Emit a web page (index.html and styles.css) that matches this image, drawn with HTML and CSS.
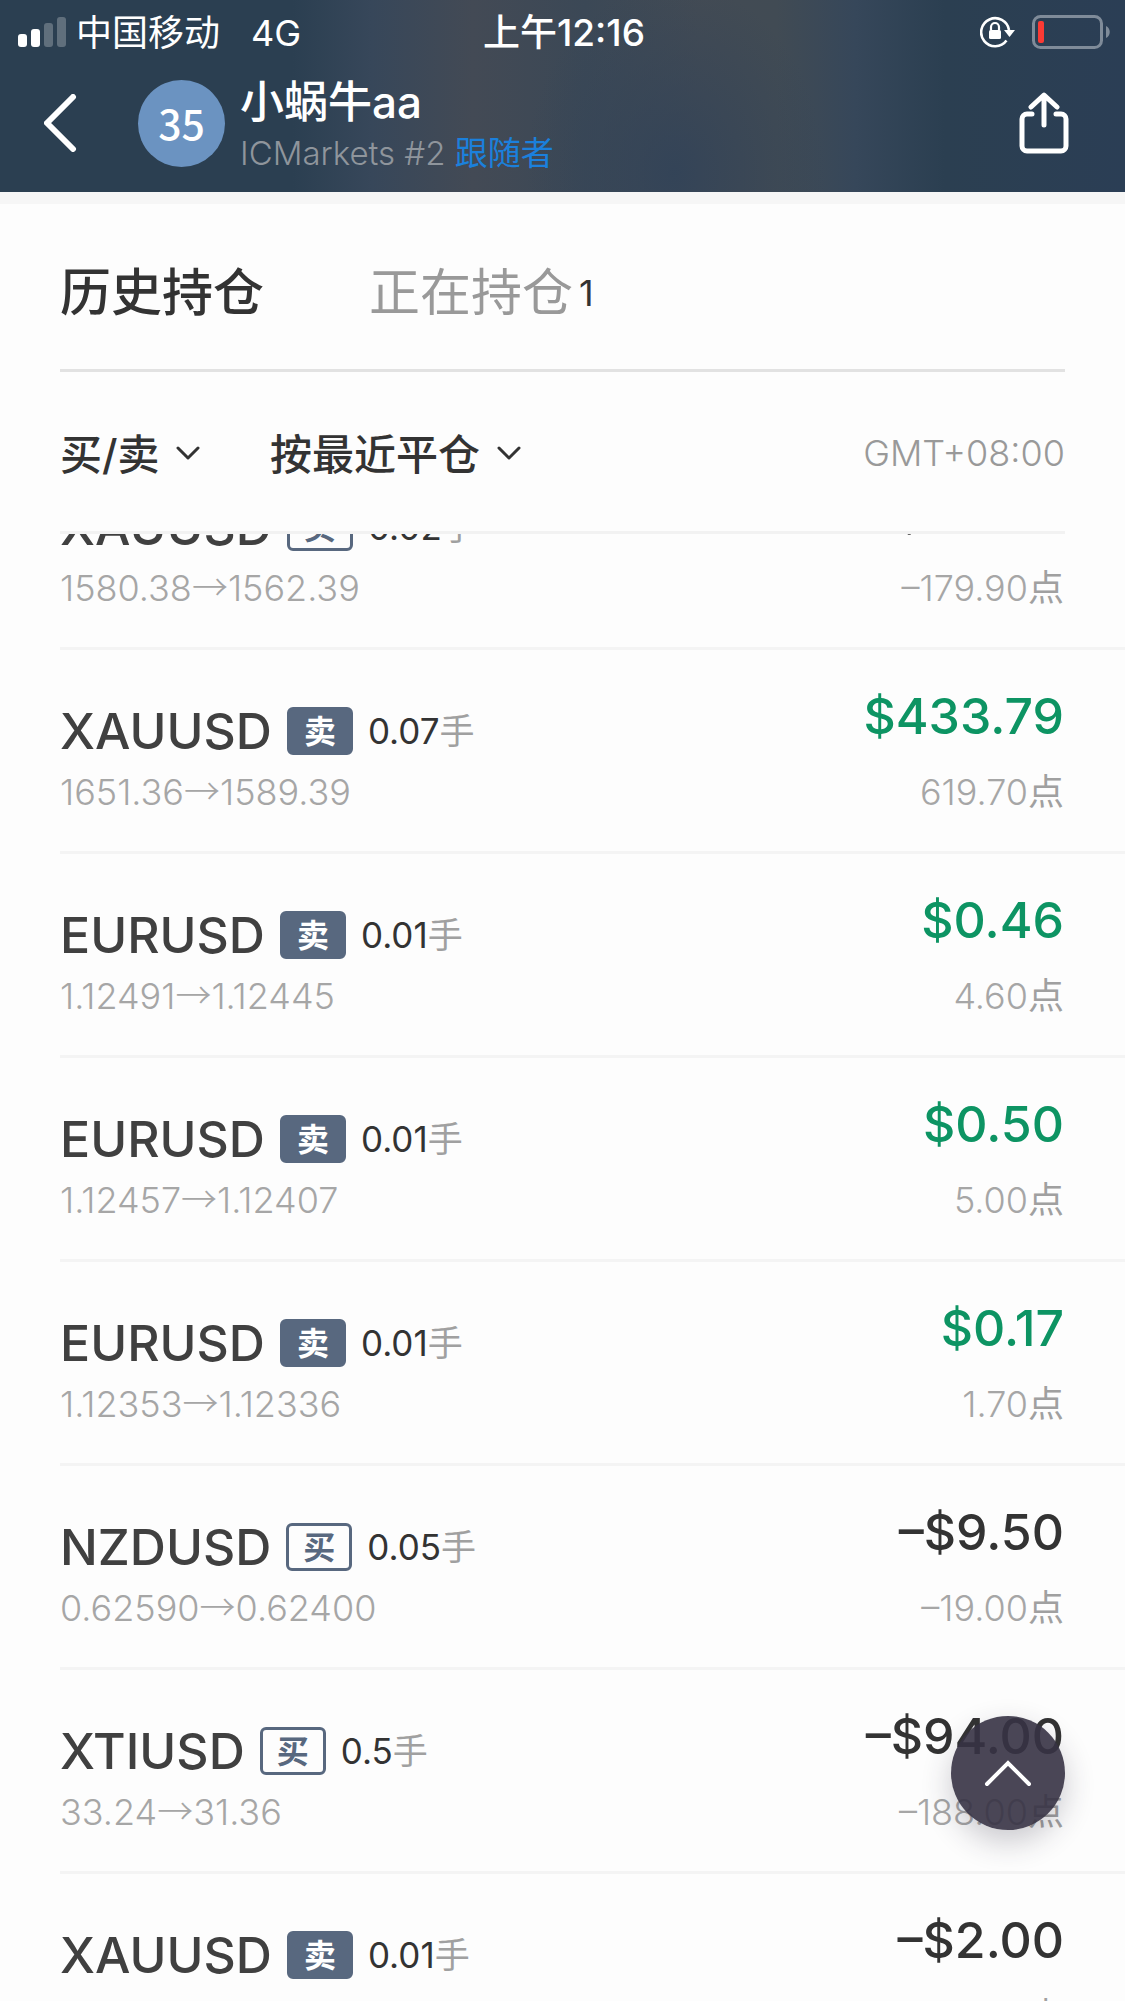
FILE: index.html
```html
<!DOCTYPE html>
<html lang="zh-CN">
<head>
<meta charset="utf-8">
<meta name="viewport" content="width=device-width, initial-scale=1">
<title>小蜗牛aa</title>
<link rel="stylesheet" href="styles.css">
</head>
<body>
<div class="app">
  <header class="header">
    <div class="status">
      <div class="status-left">
        <svg class="signal" width="48" height="30" viewBox="0 0 48 30" fill="#fff" aria-hidden="true">
          <rect x="0" y="17" width="9" height="13" rx="3"/>
          <rect x="13" y="12" width="9" height="18" rx="3"/>
          <rect x="26" y="6" width="9" height="24" rx="3" opacity=".25"/>
          <rect x="39" y="0" width="9" height="30" rx="3" opacity=".25"/>
        </svg>
        <span>中国移动</span>
        <span class="network">4G</span>
      </div>
      <span class="clock">上午12:16</span>
      <div class="status-right">
        <svg width="36" height="32" viewBox="0 0 36 32" aria-hidden="true">
          <path d="M26.5 24.5A14 14 0 1 1 29 14" fill="none" stroke="#fff" stroke-width="2.6"/>
          <path d="M24 14h11l-5.500 7z" fill="#fff"/>
          <rect x="9" y="14" width="12" height="9" rx="1.500" fill="#fff"/>
          <path d="M11 14v-3a4 4 0 0 1 8 0v3" fill="none" stroke="#fff" stroke-width="2.2"/>
        </svg>
        <svg width="78" height="34" viewBox="0 0 78 34" aria-hidden="true">
          <rect x="1.5" y="1.5" width="68" height="31" rx="7" fill="none" stroke="#7f8b99" stroke-width="3"/>
          <path d="M74 11c5 2 5 10 0 12z" fill="#7f8b99"/>
          <rect x="6" y="6" width="6" height="22" rx="2" fill="#fb3a34"/>
        </svg>
      </div>
    </div>
    <div class="nav">
      <button class="icon-btn back" type="button" aria-label="返回">
        <svg width="33" height="58" viewBox="0 0 33 58" fill="none" stroke="#fff" stroke-width="6" stroke-linecap="round" stroke-linejoin="round"><path d="M29 3 3 29l26 26"/></svg>
      </button>
      <div class="avatar">35</div>
      <div class="profile">
        <h1 class="name">小蜗牛aa</h1>
        <p class="account">ICMarkets #2 <a class="role" href="#">跟随者</a></p>
      </div>
      <button class="icon-btn share" type="button" aria-label="分享">
        <svg width="50" height="62" viewBox="0 0 50 62" fill="none" stroke="#fff" stroke-width="5" stroke-linecap="round" stroke-linejoin="round"><path d="M13 22H8a5 5 0 0 0-5 5v27a5 5 0 0 0 5 5h34a5 5 0 0 0 5-5V27a5 5 0 0 0-5-5h-5M25 33V4M12 15 25 3l13 12"/></svg>
      </button>
    </div>
  </header>

  <nav class="tabs">
    <a class="tab tab-active" href="#history">历史持仓</a>
    <a class="tab" href="#open">正在持仓<span class="count">1</span></a>
  </nav>

  <div class="filters">
    <label class="filter">
      <select class="select" aria-label="方向"><option>买/卖</option><option>买</option><option>卖</option></select>
      <svg width="24" height="14" viewBox="0 0 24 14" fill="none" stroke="#333" stroke-width="3" stroke-linecap="round" stroke-linejoin="round"><path d="m2 2 10 10L22 2"/></svg>
    </label>
    <label class="filter">
      <select class="select" aria-label="排序"><option>按最近平仓</option><option>按最近开仓</option></select>
      <svg width="24" height="14" viewBox="0 0 24 14" fill="none" stroke="#333" stroke-width="3" stroke-linecap="round" stroke-linejoin="round"><path d="m2 2 10 10L22 2"/></svg>
    </label>
    <span class="zone">GMT+08:00</span>
  </div>

  <main class="viewport" id="history">
    <ul class="trades">
      <li class="trade">
        <div class="deal"><div class="line"><span class="symbol">XAUUSD</span><span class="tag tag-buy">买</span><span class="lots">0.02<span class="unit">手</span></span></div><div class="sub">1580.38<span class="arrow">→</span>1562.39</div></div>
        <div class="result"><div class="amount">–$35.98</div><div class="sub">–179.90<span class="unit">点</span></div></div>
      </li>
      <li class="trade">
        <div class="deal"><div class="line"><span class="symbol">XAUUSD</span><span class="tag">卖</span><span class="lots">0.07<span class="unit">手</span></span></div><div class="sub">1651.36<span class="arrow">→</span>1589.39</div></div>
        <div class="result"><div class="amount gain">$433.79</div><div class="sub">619.70<span class="unit">点</span></div></div>
      </li>
      <li class="trade">
        <div class="deal"><div class="line"><span class="symbol">EURUSD</span><span class="tag">卖</span><span class="lots">0.01<span class="unit">手</span></span></div><div class="sub">1.12491<span class="arrow">→</span>1.12445</div></div>
        <div class="result"><div class="amount gain">$0.46</div><div class="sub">4.60<span class="unit">点</span></div></div>
      </li>
      <li class="trade">
        <div class="deal"><div class="line"><span class="symbol">EURUSD</span><span class="tag">卖</span><span class="lots">0.01<span class="unit">手</span></span></div><div class="sub">1.12457<span class="arrow">→</span>1.12407</div></div>
        <div class="result"><div class="amount gain">$0.50</div><div class="sub">5.00<span class="unit">点</span></div></div>
      </li>
      <li class="trade">
        <div class="deal"><div class="line"><span class="symbol">EURUSD</span><span class="tag">卖</span><span class="lots">0.01<span class="unit">手</span></span></div><div class="sub">1.12353<span class="arrow">→</span>1.12336</div></div>
        <div class="result"><div class="amount gain">$0.17</div><div class="sub">1.70<span class="unit">点</span></div></div>
      </li>
      <li class="trade">
        <div class="deal"><div class="line"><span class="symbol">NZDUSD</span><span class="tag tag-buy">买</span><span class="lots">0.05<span class="unit">手</span></span></div><div class="sub">0.62590<span class="arrow">→</span>0.62400</div></div>
        <div class="result"><div class="amount">–$9.50</div><div class="sub">–19.00<span class="unit">点</span></div></div>
      </li>
      <li class="trade">
        <div class="deal"><div class="line"><span class="symbol">XTIUSD</span><span class="tag tag-buy">买</span><span class="lots">0.5<span class="unit">手</span></span></div><div class="sub">33.24<span class="arrow">→</span>31.36</div></div>
        <div class="result"><div class="amount">–$94.00</div><div class="sub">–188.00<span class="unit">点</span></div></div>
      </li>
      <li class="trade">
        <div class="deal"><div class="line"><span class="symbol">XAUUSD</span><span class="tag">卖</span><span class="lots">0.01<span class="unit">手</span></span></div></div>
        <div class="result"><div class="amount">–$2.00</div><div class="sub"><span class="unit">点</span></div></div>
      </li>
    </ul>
  </main>

  <button class="to-top" type="button" aria-label="回到顶部">
    <svg width="48" height="28" viewBox="0 0 48 28" fill="none" stroke="#fff" stroke-width="4" stroke-linecap="round" stroke-linejoin="miter"><path d="M3 25 24 4l21 21"/></svg>
  </button>
</div>
</body>
</html>
```
FILE: styles.css
```css
* { box-sizing: border-box; }

body {
  margin: 0;
  background: #fdfdfd;
  color: #333;
  font-family: Inter, "Noto Sans CJK SC", sans-serif;
}

h1, p, ul { margin: 0; padding: 0; }
ul { list-style: none; }
a { color: inherit; text-decoration: none; }
svg { display: block; flex: none; }

.app {
  position: relative;
  display: flex;
  flex-direction: column;
  height: 100vh;
  overflow: hidden;
}

/* Header */
.header {
  flex: none;
  border-bottom: 12px solid #f6f6f6;
  background:
    radial-gradient(ellipse 150px 190px at 60% 90%, rgba(50, 67, 88, .9), transparent),
    linear-gradient(90deg, #2b3f51 0%, #2b3f51 26%, #37475a 33%, #434a55 42%, #3b4856 52%, #434b54 62%, #414b54 69%, #36475a 76%, #2b3f51 84%, #2b3e55 100%);
  background-clip: padding-box;
  color: #fff;
}

.status {
  display: grid;
  grid-template-columns: 1fr auto 1fr;
  align-items: center;
  height: 60px;
  padding: 0 15px 0 18px;
  font-size: 36px;
  line-height: 60px;
}
.status-left span, .clock { padding-top: 3px; }
.status-left { display: flex; align-items: center; gap: 10px; }
.network { margin-left: 21px; }
.clock { font-size: 37px; font-weight: 500; }
.status-right { display: flex; justify-content: flex-end; align-items: center; gap: 16px; }

.nav {
  display: flex;
  align-items: center;
  height: 132px;
  padding: 0 56px 6px 44px;
}
.icon-btn { padding: 0; border: 0; background: none; }
.avatar {
  width: 87px;
  height: 87px;
  margin: 0 15px 0 61px;
  border-radius: 50%;
  background: #6b93c1;
  font: 500 41px/84px "Noto Sans CJK SC", sans-serif;
  text-align: center;
}
.profile { flex: 1; padding-top: 5px; }
.name { font-size: 44px; font-weight: 500; line-height: 54px; }
.account { color: #8f959c; font-size: 33px; font-weight: 300; line-height: 48px; }
.role { color: #1b80dc; font-weight: 400; }

/* Tabs */
.tabs {
  display: flex;
  flex: none;
  gap: 105px;
  margin: 0 60px;
  height: 168px;
  padding-top: 5px;
  border-bottom: 3px solid #e2e2e2;
  font-size: 51px;
  line-height: 168px;
}
.tab { display: flex; height: 160px; color: #999; font-weight: 400; }
.tab-active { color: #333; font-weight: 500; }
.count { margin-left: 6px; color: #333; font-size: 36px; font-weight: 400; }

/* Filters */
.filters {
  display: flex;
  flex: none;
  align-items: center;
  gap: 70px;
  height: 162px;
  margin: 0 60px;
  padding-top: 3px;
  border-bottom: 3px solid #f2f2f2;
}
.filter { display: flex; align-items: center; gap: 16px; }
.select {
  appearance: none;
  padding: 3px 0 0;
  border: 0;
  background: none;
  color: #333;
  font: 500 42px/60px Inter, "Noto Sans CJK SC", sans-serif;
}
.zone { margin-left: auto; color: #999; font-size: 36px; font-weight: 300; }

/* Trades; the list is scrolled part of the way into its first row */
.viewport { flex: 1; min-height: 0; overflow: hidden; }
.trades { margin-top: -88px; }
.trade {
  display: flex;
  justify-content: space-between;
  align-items: flex-start;
  height: 204px;
  margin-left: 60px;
  padding-right: 61px;
  border-bottom: 3px solid #f4f4f4;
}
.deal { padding-top: 54px; }
.line { display: flex; align-items: center; height: 54px; margin-bottom: 12px; }
.symbol { color: #404040; font-size: 50px; font-weight: 500; line-height: 54px; }
.tag {
  width: 66px;
  height: 48px;
  margin: 0 15px;
  border: 3px solid #58687f;
  border-radius: 6px;
  background: #58687f;
  color: #fff;
  font-size: 32px;
  font-weight: 700;
  line-height: 44px;
  text-align: center;
}
.tag-buy { background: #fdfdfd; color: #58687f; }
.lots { font-size: 35px; font-weight: 400; line-height: 54px; }
.unit { color: #a0a0a0; font-weight: 400; }
.sub { height: 44px; color: #a6a6a6; font-size: 36px; font-weight: 300; line-height: 44px; }
.arrow { font-family: "Noto Sans CJK SC", sans-serif; line-height: 1; }
.result { padding-top: 39px; text-align: right; }
.amount { margin-bottom: 27px; font-size: 50px; font-weight: 500; line-height: 54px; }
.gain { color: #0d9463; }

.to-top {
  position: absolute;
  right: 60px;
  bottom: 171px;
  display: flex;
  justify-content: center;
  align-items: center;
  width: 114px;
  height: 114px;
  padding: 0;
  border: 0;
  border-radius: 50%;
  background: rgba(54, 50, 68, .9);
  box-shadow: 0 12px 30px rgba(40, 36, 60, .24);
}
```
